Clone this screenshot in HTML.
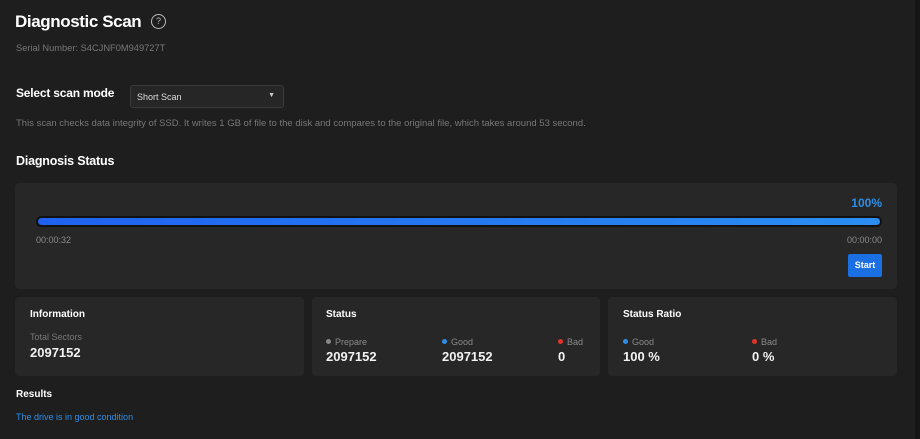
<!DOCTYPE html>
<html><head><style>
*{margin:0;padding:0;box-sizing:border-box}
body{width:920px;height:439px;background:#1e1e1f;font-family:"Liberation Sans",sans-serif;color:#fff;position:relative;overflow:hidden}
.a{position:absolute;white-space:nowrap}
.sb{position:absolute;right:0;top:0;width:5px;height:439px;background:#161617}
.card{position:absolute;background:#272728;border-radius:4px}
.lbl{font-size:9px;color:#8a8a8a}
.num{font-size:13px;font-weight:bold;color:#f2f2f2}
.dot{display:inline-block;width:5px;height:5px;border-radius:50%;margin-right:4px;vertical-align:1px}
</style></head><body>
<div class="sb"></div>
<div class="a" style="left:15px;top:12px;font-size:17px;font-weight:bold;letter-spacing:-0.4px">Diagnostic Scan</div>
<div class="a" style="left:151px;top:14px;width:15px;height:15px;border:1.3px solid #bbb;border-radius:50%;font-size:9px;color:#bbb;text-align:center;line-height:12px">?</div>
<div class="a lbl" style="left:16px;top:43px;color:#777;font-size:9.3px">Serial Number: S4CJNF0M949727T</div>
<div class="a" style="left:16px;top:86px;font-size:12px;font-weight:bold;letter-spacing:-0.2px">Select scan mode</div>
<div class="a" style="left:130px;top:85px;width:154px;height:23px;background:#262627;border:1px solid #3a3a3b;border-radius:3px;font-size:9px;color:#ddd;padding:6px 0 0 6px">Short Scan<span style="position:absolute;right:8px;top:6px;font-size:7px;color:#ccc">▼</span></div>
<div class="a lbl" style="left:16px;top:118px;color:#777;font-size:9.5px">This scan checks data integrity of SSD. It writes 1 GB of file to the disk and compares to the original file, which takes around 53 second.</div>
<div class="a" style="left:16px;top:154px;font-size:12.5px;font-weight:bold;letter-spacing:-0.2px">Diagnosis Status</div>
<div class="card" style="left:15px;top:183px;width:882px;height:106px">
<div class="a" style="right:15px;top:13px;font-size:12px;font-weight:bold;color:#2e8ee6">100%</div>
<div class="a" style="left:21px;top:33px;width:846px;height:11px;background:#111;border-radius:5px"></div>
<div class="a" style="left:23px;top:35px;width:842px;height:7px;background:linear-gradient(90deg,#1f62f0,#2b8ef0);border-radius:4px"></div>
<div class="a lbl" style="left:21px;top:52px">00:00:32</div>
<div class="a lbl" style="right:15px;top:52px">00:00:00</div>
<div class="a" style="right:15px;top:71px;width:34px;height:23px;background:#1a6fe3;border-radius:2px;font-size:9px;font-weight:bold;text-align:center;line-height:23px">Start</div>
</div>
<div class="card" style="left:15px;top:297px;width:289px;height:79px">
<div class="a" style="left:15px;top:12px;font-size:10px;font-weight:bold">Information</div>
<div class="a lbl" style="left:15px;top:35px;color:#777">Total Sectors</div>
<div class="a num" style="left:15px;top:48px">2097152</div>
</div>
<div class="card" style="left:312px;top:297px;width:288px;height:79px">
<div class="a" style="left:14px;top:12px;font-size:10px;font-weight:bold">Status</div>
<div class="a lbl" style="left:14px;top:40px"><span class="dot" style="background:#888"></span>Prepare</div>
<div class="a num" style="left:14px;top:52px">2097152</div>
<div class="a lbl" style="left:130px;top:40px"><span class="dot" style="background:#2e8ee6"></span>Good</div>
<div class="a num" style="left:130px;top:52px">2097152</div>
<div class="a lbl" style="left:246px;top:40px"><span class="dot" style="background:#e0342a"></span>Bad</div>
<div class="a num" style="left:246px;top:52px">0</div>
</div>
<div class="card" style="left:608px;top:297px;width:289px;height:79px">
<div class="a" style="left:15px;top:12px;font-size:10px;font-weight:bold">Status Ratio</div>
<div class="a lbl" style="left:15px;top:40px"><span class="dot" style="background:#2e8ee6"></span>Good</div>
<div class="a num" style="left:15px;top:52px">100 %</div>
<div class="a lbl" style="left:144px;top:40px"><span class="dot" style="background:#e0342a"></span>Bad</div>
<div class="a num" style="left:144px;top:52px">0 %</div>
</div>
<div class="a" style="left:16px;top:389px;font-size:10px;font-weight:bold">Results</div>
<div class="a" style="left:16px;top:412px;font-size:9px;color:#2e8ee6">The drive is in good condition</div>
</body></html>
